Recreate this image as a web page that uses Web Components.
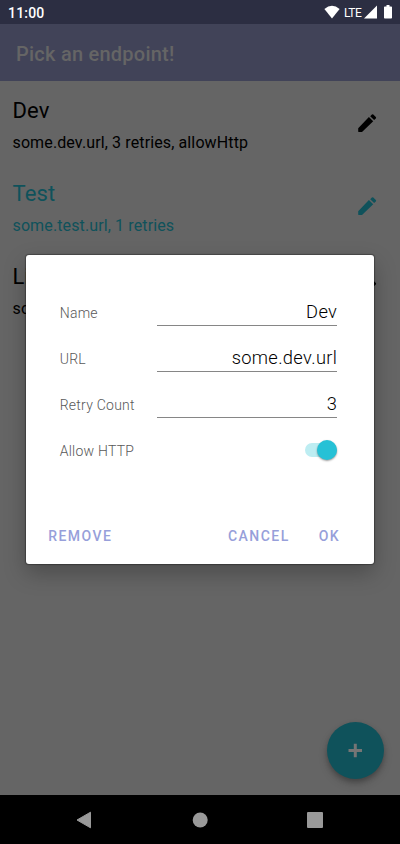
<!DOCTYPE html>
<html lang="en">
<head>
<meta charset="utf-8">
<title>Endpoints</title>
<style>
html,body{margin:0;height:844px;overflow:hidden;background:#656565;font-family:Roboto,"Liberation Sans",sans-serif}
</style>
</head>
<body>
<endpoint-app></endpoint-app>
<script>
const define = (name, html) => {
  const t = document.createElement('template');
  t.innerHTML = html;
  customElements.define(name, class extends HTMLElement {
    constructor() {
      super();
      this.attachShadow({mode: 'open'}).append(t.content.cloneNode(true));
    }
  });
};

define('status-bar', `
<style>
:host{display:flex;align-items:center;justify-content:space-between;height:24px;padding:0 5px 0 8px;box-sizing:border-box;background:#2c2e42;color:#fff;font-size:14px;font-weight:500}
.time{line-height:24px;padding-top:1px;letter-spacing:.2px}
svg{display:block}
.right{display:flex;align-items:center;height:24px}
.lte{font-size:12px;font-weight:400;line-height:24px;width:19px;margin:1px 1px 0 4px;letter-spacing:-.5px}
</style>
<span class="time">11:00</span>
<span class="right">
<svg width="16" height="24" viewBox="0 0 16 24"><path fill="#fff" d="M8 18.500 .4 9Q8 2.400 15.600 9Z"/></svg>
<span class="lte">LTE</span>
<svg width="13" height="24" viewBox="0 0 13 24"><path fill="#fff" d="M0 18.400 13 5.400V18.400Z"/></svg>
<svg width="18" height="24" viewBox="0 0 18 24"><path fill="#fff" d="M9.500 5h3v1.500h1.700q.8 0 .8.8v10.500q0 .8-.8.8h-6.400q-.8 0-.8-.8V7.300q0-.8.8-.8h1.700z"/></svg>
</span>`);

define('app-bar', `
<style>
:host{display:flex;align-items:center;height:57px;padding:3px 16px 0;box-sizing:border-box;background:#414358;color:#656565;font-size:20px;font-weight:500;letter-spacing:.24px}
</style><slot></slot>`);

define('edit-icon', `
<style>:host{display:block;width:24px;height:24px}svg{display:block}</style>
<svg width="24" height="24" viewBox="0 0 24 24"><path fill="currentColor" d="M3.200 17.200V20.500q0 .4.400.4H7L18.200 10.300 13.900 5.900ZM20.800 7.400q.7-.7 0-1.400L18.300 3.500q-.7-.7-1.400 0L15.200 5.200 19.100 9.100Z"/></svg>`);

define('endpoint-item', `
<style>
:host{display:flex;justify-content:space-between;align-items:center;height:83px;padding:0 21px 0 12.500px;box-sizing:border-box;color:#000}
:host([selected]){color:#0f525b}
.t{font-size:22px;line-height:30px;margin-top:4px;letter-spacing:.15px}
.s{font-size:16px;line-height:24px;margin-top:4px;padding-top:1px;letter-spacing:.12px;margin-bottom:-1px}
edit-icon{margin-top:1px}
</style>
<div><div class="t"><slot name="title"></slot></div><div class="s"><slot></slot></div></div>
<edit-icon></edit-icon>`);

define('add-button', `
<style>
:host{display:block;width:57px;height:57px;border-radius:50%;background:#0f525b;box-shadow:0 3px 5px rgba(0,0,0,.22),0 5px 10px rgba(0,0,0,.15)}
svg{display:block}
</style>
<svg width="57" height="57" viewBox="0 0 57 57"><path d="M21.500 28.500h13.500M28.300 21.700v13.500" stroke="#757575" stroke-width="3"/></svg>`);

define('nav-bar', `
<style>
:host{display:flex;align-items:center;justify-content:space-around;height:49px;padding:0 27px;box-sizing:border-box;background:#000}
svg{display:block}
</style>
<svg width="18" height="18" viewBox="0 0 18 18"><path fill="#999" stroke="#999" stroke-linejoin="round" d="M1 9 14.500 1.200V16.800Z"/></svg>
<svg width="18" height="18" viewBox="0 0 18 18"><circle cx="9.200" cy="9" r="7.500" fill="#999"/></svg>
<svg width="18" height="18" viewBox="0 0 18 18"><rect x="1" y="1" width="16" height="16" rx="1" fill="#999"/></svg>`);

define('form-row', `
<style>
:host{display:grid;grid-template-columns:98px 1fr;height:46px;align-items:center}
.l{font-size:14px;font-weight:350;color:#585858;letter-spacing:.25px;padding:2px 0 0 .5px}
.v{height:30px;box-sizing:border-box;border-bottom:1px solid #868686;text-align:right;font-size:18.300px;font-weight:350;line-height:32px;color:#000;letter-spacing:.33px;margin-top:-3px}
:host([plain]) .v{border:0;display:flex;justify-content:flex-end;align-items:center;margin-top:0}
</style>
<span class="l"><slot name="label"></slot></span><div class="v"><slot></slot></div>`);

define('toggle-switch', `
<style>
:host{display:flex;align-items:center;justify-content:flex-end;width:32px;height:14px;border-radius:7px;background:#bdedf2}
i{display:block;width:20.500px;height:20.500px;border-radius:50%;background:#26c1d6;box-shadow:0 1px 2px rgba(0,0,0,.4)}
</style><i></i>`);

define('text-button', `
<style>:host{display:block;font-size:14px;font-weight:500;line-height:20px;letter-spacing:1.480px;color:#979fda}</style><slot></slot>`);

define('endpoint-dialog', `
<style>
:host{display:flex;flex-direction:column;width:347.500px;height:309px;box-sizing:border-box;padding:34px 36.500px 18px 33px;border-radius:3px;background:#fff;box-shadow:0 0 1px 1px rgba(0,0,0,.3),0 9px 22px rgba(0,0,0,.26)}
.actions{display:flex;margin:auto -3px 0 -11px}
.gap{flex:1}
.ok{margin-left:29px}
</style>
<form-row><span slot="label">Name</span>Dev</form-row>
<form-row><span slot="label">URL</span>some.dev.url</form-row>
<form-row><span slot="label">Retry Count</span>3</form-row>
<form-row plain><span slot="label">Allow HTTP</span><toggle-switch></toggle-switch></form-row>
<div class="actions"><text-button>REMOVE</text-button><span class="gap"></span><text-button>CANCEL</text-button><text-button class="ok">OK</text-button></div>`);

define('endpoint-app', `
<style>
:host{display:flex;flex-direction:column;position:relative;width:400px;height:844px;background:#656565;overflow:hidden}
main{flex:1;display:flex;flex-direction:column}
add-button{margin:auto 16px 16px auto}
endpoint-dialog{position:absolute;left:26.200px;top:255px}
</style>
<status-bar></status-bar>
<app-bar>Pick an endpoint!</app-bar>
<main>
<endpoint-item><span slot="title">Dev</span>some.dev.url, 3 retries, allowHttp</endpoint-item>
<endpoint-item selected><span slot="title">Test</span>some.test.url, 1 retries</endpoint-item>
<endpoint-item><span slot="title">Li</span>so</endpoint-item>
<add-button></add-button>
</main>
<nav-bar></nav-bar>
<endpoint-dialog></endpoint-dialog>`);
</script>
</body>
</html>
